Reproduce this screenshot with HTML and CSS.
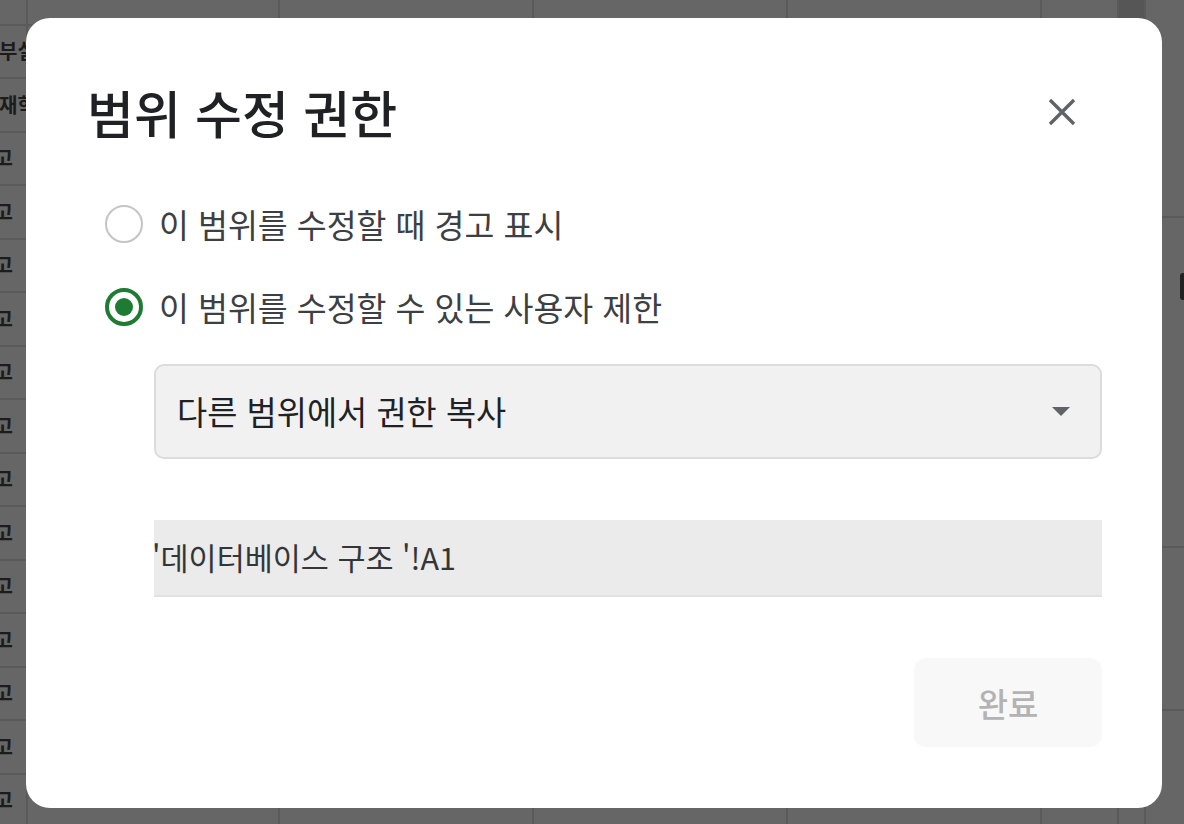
FILE: index.html
```html
<!DOCTYPE html>
<html lang="ko">
<head>
<meta charset="utf-8">
<title>범위 수정 권한</title>
<link rel="stylesheet" href="styles.css">
</head>
<body>
<div class="sheet">
  <div class="grid">
    <div class="cell first"></div><div class="cell"></div><div class="cell"></div><div class="cell"></div><div class="cell"></div><div class="cell"></div><div class="cell head-sel"></div>
    <div class="cell first"><span class="t t-a">부실</span></div><div class="cell"></div><div class="cell"></div><div class="cell"></div><div class="cell"></div><div class="cell"></div><div class="cell"></div>
    <div class="cell first"><span class="t t-a">재학</span></div><div class="cell"></div><div class="cell"></div><div class="cell"></div><div class="cell"></div><div class="cell"></div><div class="cell"></div>
    <div class="cell first"><span class="t t-b">경고</span></div><div class="cell"></div><div class="cell"></div><div class="cell"></div><div class="cell"></div><div class="cell"></div><div class="cell"></div>
    <div class="cell first"><span class="t t-b">경고</span></div><div class="cell"></div><div class="cell"></div><div class="cell"></div><div class="cell"></div><div class="cell"></div><div class="cell"></div>
    <div class="cell first"><span class="t t-b">경고</span></div><div class="cell"></div><div class="cell"></div><div class="cell"></div><div class="cell"></div><div class="cell"></div><div class="cell"></div>
    <div class="cell first"><span class="t t-b">경고</span></div><div class="cell"></div><div class="cell"></div><div class="cell"></div><div class="cell"></div><div class="cell"></div><div class="cell"></div>
    <div class="cell first"><span class="t t-b">경고</span></div><div class="cell"></div><div class="cell"></div><div class="cell"></div><div class="cell"></div><div class="cell"></div><div class="cell"></div>
    <div class="cell first"><span class="t t-b">경고</span></div><div class="cell"></div><div class="cell"></div><div class="cell"></div><div class="cell"></div><div class="cell"></div><div class="cell"></div>
    <div class="cell first"><span class="t t-b">경고</span></div><div class="cell"></div><div class="cell"></div><div class="cell"></div><div class="cell"></div><div class="cell"></div><div class="cell"></div>
    <div class="cell first"><span class="t t-b">경고</span></div><div class="cell"></div><div class="cell"></div><div class="cell"></div><div class="cell"></div><div class="cell"></div><div class="cell"></div>
    <div class="cell first"><span class="t t-b">경고</span></div><div class="cell"></div><div class="cell"></div><div class="cell"></div><div class="cell"></div><div class="cell"></div><div class="cell"></div>
    <div class="cell first"><span class="t t-b">경고</span></div><div class="cell"></div><div class="cell"></div><div class="cell"></div><div class="cell"></div><div class="cell"></div><div class="cell"></div>
    <div class="cell first"><span class="t t-b">경고</span></div><div class="cell"></div><div class="cell"></div><div class="cell"></div><div class="cell"></div><div class="cell"></div><div class="cell"></div>
    <div class="cell first"><span class="t t-b">경고</span></div><div class="cell"></div><div class="cell"></div><div class="cell"></div><div class="cell"></div><div class="cell"></div><div class="cell"></div>
    <div class="cell first"><span class="t t-b">경고</span></div><div class="cell"></div><div class="cell"></div><div class="cell"></div><div class="cell"></div><div class="cell"></div><div class="cell"></div>
    <div class="cell first"><span class="t t-b">경고</span></div><div class="cell"></div><div class="cell"></div><div class="cell"></div><div class="cell"></div><div class="cell"></div><div class="cell"></div>
  </div>
  <div class="side">
    <div class="side-block b1"></div>
    <div class="side-block b2"><span class="mark"></span></div>
    <div class="side-block b3"></div>
    <div class="side-block b4"></div>
  </div>
</div>

<div class="overlay">
  <div class="dialog" role="dialog" aria-labelledby="dlg-title">
    <div class="header">
      <h1 id="dlg-title" class="title">범위 수정 권한</h1>
      <button class="close" aria-label="닫기">
        <svg width="30" height="30" viewBox="0 0 30 30"><path d="M3 3 L27 27 M27 3 L3 27" stroke="#5f6368" stroke-width="3.4" stroke-linecap="butt" fill="none"/></svg>
      </button>
    </div>
    <div class="options">
      <label class="option"><span class="radio"></span><span class="label">이 범위를 수정할 때 경고 표시</span></label>
      <label class="option"><span class="radio checked"></span><span class="label">이 범위를 수정할 수 있는 사용자 제한</span></label>
    </div>
    <div class="select">
      <span class="select-text">다른 범위에서 권한 복사</span>
      <span class="caret"></span>
    </div>
    <div class="range">'데이터베이스 구조 '!A1</div>
    <div class="footer">
      <button class="done">완료</button>
    </div>
  </div>
</div>
</body>
</html>
```
FILE: styles.css
```css
html, body {
  margin: 0;
  padding: 0;
}
body {
  width: 1184px;
  height: 824px;
  overflow: hidden;
  background: #666666;
  font-family: "Noto Sans CJK KR", "Noto Sans", sans-serif;
  position: relative;
}

/* background spreadsheet (dimmed) */
.sheet {
  display: flex;
  width: 1184px;
  height: 824px;
  overflow: hidden;
}
.grid {
  display: grid;
  grid-template-columns: 28px 252px 254px 254px 254px 77px 27px;
  grid-auto-rows: 53.5px;
  margin-top: -28px;
  width: 1146px;
  flex: none;
}
.cell {
  box-sizing: border-box;
  border-right: 2px solid #5a5a5a;
  border-bottom: 2px solid #5a5a5a;
  position: relative;
  overflow: visible;
  display: flex;
  align-items: center;
  white-space: nowrap;
}
.cell.head-sel {
  background: #565656;
}
.t {
  font-size: 20px;
  font-weight: 700;
  color: #1c1c1c;
  line-height: 1;
}
.t-a { margin-left: -1px; }
.t-b { margin-left: -24px; }

.side {
  display: flex;
  flex-direction: column;
  width: 38px;
  flex: none;
}
.side-block {
  box-sizing: border-box;
  border-bottom: 2px solid #5a5a5a;
  position: relative;
}
.b1 { height: 218px; }
.b2 { height: 330px; }
.b3 { height: 163px; }
.b4 { flex: 1; border-bottom: none; }
.mark {
  position: absolute;
  left: 34px;
  top: 55px;
  width: 8px;
  height: 27px;
  border-radius: 3px;
  background: #222;
}

/* modal */
.overlay {
  position: absolute;
  inset: 0;
}
.dialog {
  position: absolute;
  left: 26px;
  top: 18px;
  width: 1136px;
  height: 790px;
  box-sizing: border-box;
  background: #ffffff;
  border-radius: 24px;
  padding: 60px 60px 0 61px;
  display: flex;
  flex-direction: column;
}
.header {
  display: flex;
  align-items: center;
  justify-content: space-between;
  height: 68px;
}
.title {
  margin: 0;
  font-size: 51px;
  font-weight: 500;
  color: #202124;
  line-height: 68px;
  letter-spacing: 0;
}
.close {
  width: 80px;
  height: 68px;
  border: none;
  background: transparent;
  padding: 0;
  display: flex;
  align-items: center;
  justify-content: center;
  margin-right: 0;
}

.options {
  margin-top: 50px;
  display: flex;
  flex-direction: column;
  gap: 27px;
  padding-left: 18px;
}
.option {
  display: flex;
  align-items: center;
  height: 56px;
  gap: 16px;
}
.radio {
  box-sizing: border-box;
  width: 38px;
  height: 38px;
  border-radius: 50%;
  border: 2px solid #c4c4c4;
  flex: none;
  display: flex;
  align-items: center;
  justify-content: center;
}
.radio.checked {
  border: 4px solid #1e7b34;
}
.radio.checked::after {
  content: "";
  width: 18px;
  height: 18px;
  border-radius: 50%;
  background: #1e7b34;
}
.label {
  font-size: 32.5px;
  color: #3c4043;
  line-height: 1;
}

.select {
  margin-top: 29px;
  margin-left: 67px;
  height: 95px;
  box-sizing: border-box;
  background: #f1f1f1;
  border: 2px solid #dadcde;
  border-radius: 10px;
  display: flex;
  align-items: center;
  justify-content: space-between;
  padding: 0 30px 0 21px;
}
.select-text {
  font-size: 32.8px;
  color: #202124;
  line-height: 1;
}
.caret {
  width: 0;
  height: 0;
  border-left: 9px solid transparent;
  border-right: 9px solid transparent;
  border-top: 9px solid #5f6368;
}

.range {
  margin-top: 61px;
  margin-left: 67px;
  height: 77px;
  box-sizing: border-box;
  background: #ebebeb;
  border-bottom: 2px solid #e2e2e2;
  display: flex;
  align-items: center;
  font-size: 30.5px;
  color: #333638;
  line-height: 1;
  text-indent: -2px;
}

.footer {
  margin-top: 61px;
  display: flex;
  justify-content: flex-end;
}
.done {
  width: 188px;
  height: 89px;
  border: none;
  border-radius: 12px;
  background: #f8f8f8;
  color: #b3b3b3;
  font-family: "Noto Sans CJK KR", "Noto Sans", sans-serif;
  font-size: 33px;
  font-weight: 500;
  padding: 0;
}
```
